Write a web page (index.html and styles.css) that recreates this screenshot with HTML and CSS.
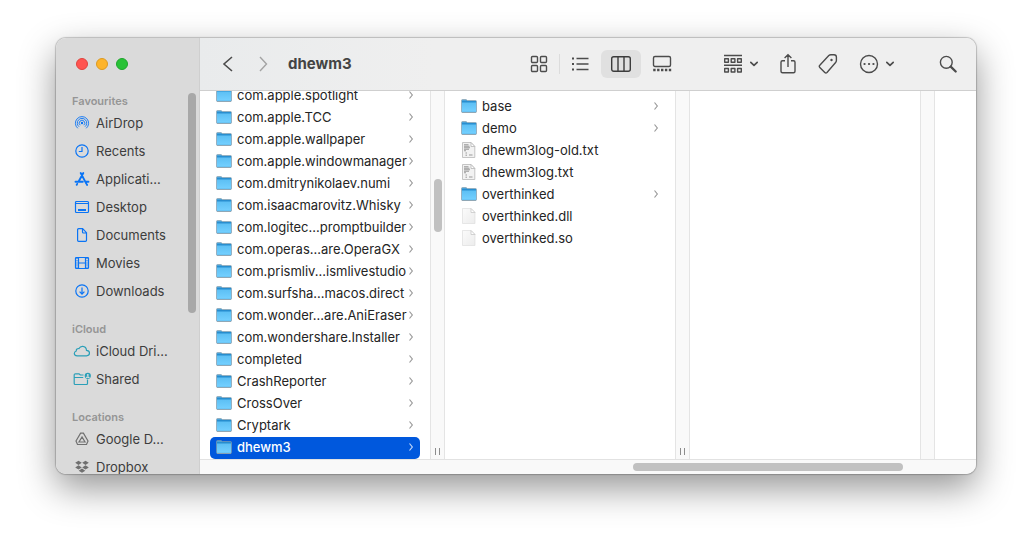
FILE: index.html
```html
<!DOCTYPE html>
<html lang="en">
<head>
<meta charset="utf-8">
<title>dhewm3</title>
<link rel="stylesheet" href="styles.css">
</head>
<body>
<svg class="sprite" aria-hidden="true">
  <defs>
    <linearGradient id="folder-fill" x1="0" y1="0" x2="0" y2="1"><stop offset="0" stop-color="#5cbff4"/><stop offset="1" stop-color="#74d0ff"/></linearGradient>
    <linearGradient id="page-fill" x1="0" y1="0" x2="1" y2="1"><stop offset="0" stop-color="#fbfbfb"/><stop offset="1" stop-color="#ececec"/></linearGradient>
  </defs>
  <symbol id="folder" viewBox="0 0 16 16">
    <path d="M.5 13.500V2.500q0-1 1-1H5l1.500 1h8q1 0 1 1v10q0 1-1 1h-13q-1 0-1-1z" fill="#4aa3da" stroke="#8a9ba5" stroke-width=".6"/>
    <path d="M1 3.200h14v1.600H1z" fill="#1f87cb"/>
    <path d="M1 4.500h14V13.800H1z" fill="url(#folder-fill)"/>
    <path d="M1 14.500h14" stroke="#8fa5b2" stroke-width=".8"/>
  </symbol>
  <symbol id="text-file" viewBox="0 0 16 16">
    <path d="M1.500.5H10L13.800 4.500v11H1.500z" fill="#f2f2f2" stroke="#b8b8b8" stroke-width=".8"/>
    <path d="M10 .5v4h3.800z" fill="#fff" stroke="#b5b5b5" stroke-width=".8"/>
    <path d="M3 2.800h4.500M3 4.300h5.500M3 5.800h6M3 7.300h5M3 8.800h2" stroke="#9a9a9a" stroke-width="1.100"/>
    <path d="M4.500 11h1.500M4.500 13.200h1.500M8 13h3.500" stroke="#999"/>
  </symbol>
  <symbol id="blank-file" viewBox="0 0 16 16">
    <path d="M1.500.5H10L14 4.500v11H1.500z" fill="url(#page-fill)" stroke="#dedede" stroke-width=".7"/>
    <path d="M10 .5v4h4z" fill="#fff" stroke="#c8c8c8" stroke-width=".8"/>
  </symbol>
  <symbol id="more-right" viewBox="0 0 6 10"><path d="M1.500 1.500 4.300 5 1.500 8.500" fill="none" stroke="currentColor" stroke-width="1.200"/></symbol>
  <symbol id="chevron-down" viewBox="0 0 10 10"><path d="m1.800 3.300 3.200 3 3.200-3" fill="none" stroke="currentColor" stroke-width="1.700" stroke-linecap="round" stroke-linejoin="round"/></symbol>
</svg>

<main class="window">
  <aside class="sidebar">
    <div class="traffic">
      <button class="light light-close" aria-label="Close"></button>
      <button class="light light-minimise" aria-label="Minimise"></button>
      <button class="light light-zoom" aria-label="Zoom"></button>
    </div>
    <div class="sidebar-body">
      <nav class="places" aria-label="Places">
        <section class="place-group">
          <h2 class="place-title">Favourites</h2>
          <a class="place" href="#"><svg class="place-icon" viewBox="0 0 16 16"><path d="M3.800 13.300a6.600 6.600 0 1 1 8.400 0M5 11.700a4.700 4.700 0 1 1 6 0M6.200 10.200a2.800 2.800 0 1 1 3.600 0" stroke-width=".9"/><circle cx="8" cy="8" r="1.200" fill="currentColor" stroke="none"/></svg><span class="place-name">AirDrop</span></a>
          <a class="place" href="#"><svg class="place-icon" viewBox="0 0 16 16"><circle cx="8" cy="8" r="6.200"/><path d="M8 4v4.500H4.800"/></svg><span class="place-name">Recents</span></a>
          <a class="place" href="#"><svg class="place-icon" viewBox="0 0 16 16"><path d="m6.700 2 5.600 10.600M9.300 2 4.500 10.800M1.500 10.700h7.300M11.800 10.700h2.700M3.200 12.900l-.5.900M12.900 13.600l.2.300" stroke-width="1.900" stroke-linecap="round"/></svg><span class="place-name">Applicati...</span></a>
          <a class="place" href="#"><svg class="place-icon" viewBox="0 0 16 16"><rect x="1.500" y="2.500" width="13" height="11" rx="1"/><path d="M2 4.500h12"/><path d="M4 11h8" stroke-width="1.800"/></svg><span class="place-name">Desktop</span></a>
          <a class="place" href="#"><svg class="place-icon" viewBox="0 0 16 16"><path d="M4.600 1.700h4l3.900 4v7.600q0 1-1 1H4.600q-1 0-1-1V2.700q0-1 1-1zM8.500 2v3q0 1 1 1h3"/></svg><span class="place-name">Documents</span></a>
          <a class="place" href="#"><svg class="place-icon" viewBox="0 0 16 16"><rect x="1.500" y="2.500" width="13" height="11" rx=".8"/><path d="M4.500 2.500v11M11.500 2.500v11M4.500 8h7"/><path d="M3 3v10M13 3v10" stroke-dasharray="1 1.200"/></svg><span class="place-name">Movies</span></a>
          <a class="place" href="#"><svg class="place-icon" viewBox="0 0 16 16"><circle cx="8" cy="8" r="6.200"/><path d="M8 4.500v6.500M5.600 8.700 8 11.100l2.400-2.400"/></svg><span class="place-name">Downloads</span></a>
        </section>
        <section class="place-group">
          <h2 class="place-title">iCloud</h2>
          <a class="place" href="#"><svg class="place-icon place-icon-teal" viewBox="0 0 16 16"><path d="M3.300 12.800C.9 12.800.3 11.500.3 10.500c0-1.200.7-2.100 1.900-2.500-.1-1.700 1.300-2.800 2.800-2.400.8-1.700 2.200-2.400 3.700-2.300 2.300.2 3.700 1.900 3.800 4.100 1.800.2 3 1.200 3 2.700s-1.200 2.700-3 2.700z"/></svg><span class="place-name">iCloud Dri...</span></a>
          <a class="place" href="#"><svg class="place-icon place-icon-teal" viewBox="0 0 16 16"><path d="M9.500 4H6.300L5 2.800H1.500q-1.300 0-1.300 1v8.700q0 1 1 1h11.300q1 0 1-1V8.500M.5 6.500h8.700"/><circle cx="13.800" cy="4.800" r="3.100" fill="currentColor" stroke="none"/><circle cx="13.800" cy="3.900" r="1" fill="#dadada" stroke="none"/><path d="M12.200 6.800q1.600-1.600 3.200 0" stroke="#dadada"/></svg><span class="place-name">Shared</span></a>
        </section>
        <section class="place-group">
          <h2 class="place-title">Locations</h2>
          <a class="place" href="#"><svg class="place-icon place-icon-grey" viewBox="0 0 16 16"><path d="M6.600 2.200h2.800L14 10l-1.500 3.500h-9L2 10zM8 6l-3 5h6z"/></svg><span class="place-name">Google D...</span></a>
          <a class="place" href="#"><svg class="place-icon place-icon-grey" viewBox="0 0 16 16"><path d="m4.500 1.700 3.300 2.100-3.300 2.100-3.300-2.100zM11.500 1.700l3.300 2.100-3.300 2.100-3.300-2.100zM4.500 6.300l3.300 2.100-3.300 2.100-3.300-2.100zM11.500 6.300l3.300 2.100-3.300 2.100-3.300-2.100zM8 9.500l3.300 2.200L8 13.800l-3.300-2.100z" fill="currentColor" stroke="none"/></svg><span class="place-name">Dropbox</span></a>
        </section>
      </nav>
      <div class="sidebar-thumb"></div>
    </div>
  </aside>

  <section class="browser">
    <header class="toolbar">
      <button class="tool tool-back" aria-label="Back"><svg class="tool-icon" viewBox="0 0 20 20"><path d="M14 3 6 10l8 7" stroke-width="1.600"/></svg></button>
      <button class="tool tool-forward" aria-label="Forward"><svg class="tool-icon" viewBox="0 0 20 20"><path d="m6 3 6.500 7L6 17"/></svg></button>
      <h1 class="title">dhewm3</h1>
      <div class="tool-group views">
        <button class="tool" aria-label="Icon view"><svg class="tool-icon" viewBox="0 0 20 20"><rect x="2.500" y="2.500" width="6" height="6" rx="1"/><rect x="11.500" y="2.500" width="6" height="6" rx="1"/><rect x="2.500" y="11.500" width="6" height="6" rx="1"/><rect x="11.500" y="11.500" width="6" height="6" rx="1"/></svg></button>
        <span class="divider"></span>
        <button class="tool" aria-label="List view"><svg class="tool-icon" viewBox="0 0 20 20"><path d="M6.500 4.500h12M6.500 10h12M6.500 15.500h12"/><path d="M2 4.500h2M2 10h2M2 15.500h2" stroke-width="2"/></svg></button>
        <button class="tool tool-active" aria-label="Column view" aria-pressed="true"><svg class="tool-icon" viewBox="0 0 20 20"><rect x=".7" y="2.700" width="18.600" height="14.600" rx="2"/><path d="M7 3v14M13 3v14"/></svg></button>
        <button class="tool" aria-label="Gallery view"><svg class="tool-icon" viewBox="0 0 20 20"><rect x="1.500" y="2.500" width="17" height="10" rx="1.500"/><path d="M1.200 16h18" stroke-width="2.400" stroke-dasharray="2.400 1.500"/></svg></button>
      </div>
      <button class="tool tool-menu tool-arrange" aria-label="Group by"><svg class="tool-icon" viewBox="0 0 20 20"><path d="M1 1.500h18M1 11.200h18"/><path d="M1.700 4.800h3.700v3.500H1.700zM8.200 4.800h3.700v3.500H8.200zM14.600 4.800h3.700v3.500h-3.700zM1.700 14.500h3.700V18H1.700zM8.200 14.500h3.700V18H8.200zM14.600 14.500h3.700V18h-3.700z" stroke-linejoin="round"/></svg><svg class="menu-arrow"><use href="#chevron-down"/></svg></button>
      <button class="tool" aria-label="Share"><svg class="tool-icon" viewBox="0 0 20 20"><path d="M7 6.700H4.500q-1.500 0-1.500 1.500v9q0 1.500 1.500 1.500h11q1.500 0 1.500-1.500v-9q0-1.500-1.500-1.500H13M10 13V1M6.600 4 10 .7 13.400 4"/></svg></button>
      <button class="tool tool-tags" aria-label="Tags"><svg class="tool-icon" viewBox="0 0 20 20"><path d="M10.800 1.500q.9-.8 2-.8h3.200q2.400 0 2.400 2.400v3.400q0 1.100-.8 2L9 18.400q-1.100 1.100-2.200 0l-5-5q-1.100-1.100 0-2.200z"/><circle cx="13.500" cy="6" r="1.200" fill="currentColor" stroke="none"/></svg></button>
      <button class="tool tool-menu" aria-label="Actions"><svg class="tool-icon" viewBox="0 0 20 20"><circle cx="10" cy="10" r="8.500"/><path d="M5.500 10h.1M10 10h.1M14.400 10h.1" stroke-width="2.200" stroke-linecap="round"/></svg><svg class="menu-arrow"><use href="#chevron-down"/></svg></button>
      <button class="tool tool-search" aria-label="Search"><svg class="tool-icon" viewBox="0 0 20 20"><circle cx="8.300" cy="8.300" r="5.900"/><path d="m12.700 12.700 5 4.800" stroke-width="2.300" stroke-linecap="round"/></svg></button>
    </header>

    <div class="columns">
      <ul class="files files-end">
        <li class="file"><svg class="file-icon"><use href="#folder"/></svg><span class="file-name">com.apple.spotlight</span><svg class="file-more"><use href="#more-right"/></svg></li>
        <li class="file"><svg class="file-icon"><use href="#folder"/></svg><span class="file-name">com.apple.TCC</span><svg class="file-more"><use href="#more-right"/></svg></li>
        <li class="file"><svg class="file-icon"><use href="#folder"/></svg><span class="file-name">com.apple.wallpaper</span><svg class="file-more"><use href="#more-right"/></svg></li>
        <li class="file"><svg class="file-icon"><use href="#folder"/></svg><span class="file-name">com.apple.windowmanager</span><svg class="file-more"><use href="#more-right"/></svg></li>
        <li class="file"><svg class="file-icon"><use href="#folder"/></svg><span class="file-name">com.dmitrynikolaev.numi</span><svg class="file-more"><use href="#more-right"/></svg></li>
        <li class="file"><svg class="file-icon"><use href="#folder"/></svg><span class="file-name">com.isaacmarovitz.Whisky</span><svg class="file-more"><use href="#more-right"/></svg></li>
        <li class="file"><svg class="file-icon"><use href="#folder"/></svg><span class="file-name">com.logitec...promptbuilder</span><svg class="file-more"><use href="#more-right"/></svg></li>
        <li class="file"><svg class="file-icon"><use href="#folder"/></svg><span class="file-name">com.operas...are.OperaGX</span><svg class="file-more"><use href="#more-right"/></svg></li>
        <li class="file"><svg class="file-icon"><use href="#folder"/></svg><span class="file-name">com.prismliv...ismlivestudio</span><svg class="file-more"><use href="#more-right"/></svg></li>
        <li class="file"><svg class="file-icon"><use href="#folder"/></svg><span class="file-name">com.surfsha...macos.direct</span><svg class="file-more"><use href="#more-right"/></svg></li>
        <li class="file"><svg class="file-icon"><use href="#folder"/></svg><span class="file-name">com.wonder...are.AniEraser</span><svg class="file-more"><use href="#more-right"/></svg></li>
        <li class="file"><svg class="file-icon"><use href="#folder"/></svg><span class="file-name">com.wondershare.Installer</span><svg class="file-more"><use href="#more-right"/></svg></li>
        <li class="file"><svg class="file-icon"><use href="#folder"/></svg><span class="file-name">completed</span><svg class="file-more"><use href="#more-right"/></svg></li>
        <li class="file"><svg class="file-icon"><use href="#folder"/></svg><span class="file-name">CrashReporter</span><svg class="file-more"><use href="#more-right"/></svg></li>
        <li class="file"><svg class="file-icon"><use href="#folder"/></svg><span class="file-name">CrossOver</span><svg class="file-more"><use href="#more-right"/></svg></li>
        <li class="file"><svg class="file-icon"><use href="#folder"/></svg><span class="file-name">Cryptark</span><svg class="file-more"><use href="#more-right"/></svg></li>
        <li class="file file-selected"><svg class="file-icon"><use href="#folder"/></svg><span class="file-name">dhewm3</span><svg class="file-more"><use href="#more-right"/></svg></li>
      </ul>
      <div class="track"><span class="track-thumb"></span><span class="grip"></span></div>
      <ul class="files">
        <li class="file"><svg class="file-icon"><use href="#folder"/></svg><span class="file-name">base</span><svg class="file-more"><use href="#more-right"/></svg></li>
        <li class="file"><svg class="file-icon"><use href="#folder"/></svg><span class="file-name">demo</span><svg class="file-more"><use href="#more-right"/></svg></li>
        <li class="file"><svg class="file-icon"><use href="#text-file"/></svg><span class="file-name">dhewm3log-old.txt</span></li>
        <li class="file"><svg class="file-icon"><use href="#text-file"/></svg><span class="file-name">dhewm3log.txt</span></li>
        <li class="file"><svg class="file-icon"><use href="#folder"/></svg><span class="file-name">overthinked</span><svg class="file-more"><use href="#more-right"/></svg></li>
        <li class="file"><svg class="file-icon"><use href="#blank-file"/></svg><span class="file-name">overthinked.dll</span></li>
        <li class="file"><svg class="file-icon"><use href="#blank-file"/></svg><span class="file-name">overthinked.so</span></li>
      </ul>
      <div class="track"><span class="grip"></span></div>
      <div class="files"></div>
      <div class="track"></div>
      <div class="rest"></div>
    </div>
    <div class="scroll-x"><span class="scroll-x-thumb"></span></div>
  </section>
</main>
</body>
</html>
```
FILE: styles.css
```css
* {
  box-sizing: border-box;
}

body {
  display: flex;
  height: 100vh;
  margin: 0;
  padding: 38px 56px 74px;
  background: #fff;
  color: #242424;
  font-family: Inter, "Liberation Sans", sans-serif;
  font-size: 13px;
  line-height: 16px;
}

.sprite {
  position: absolute;
  width: 0;
  height: 0;
}

button {
  margin: 0;
  padding: 0;
  border: 0;
  background: none;
  color: inherit;
  font: inherit;
}

.window {
  display: flex;
  flex: 1;
  min-width: 0;
  overflow: hidden;
  border-radius: 10px;
  background: #fff;
  box-shadow: 0 0 1px 1px rgba(0, 0, 0, 0.2), 0 14px 36px rgba(0, 0, 0, 0.42);
}

/* Sidebar */
.sidebar {
  display: flex;
  flex: none;
  flex-direction: column;
  width: 144px;
  border-right: 1px solid #cfcfcf;
  background: #dadada;
}

.traffic {
  display: flex;
  flex: none;
  gap: 8px;
  height: 55px;
  padding: 20px 20px 0;
}

.light {
  width: 12px;
  height: 12px;
  border: 1px solid;
  border-radius: 50%;
}

.light-close {
  border-color: #e0443e;
  background: #ff5450;
}

.light-minimise {
  border-color: #dd9a20;
  background: #fdb42a;
}

.light-zoom {
  border-color: #1ea52c;
  background: #28c236;
}

.sidebar-body {
  display: flex;
  flex: 1;
  min-height: 0;
}

.places {
  display: flex;
  flex: 1;
  flex-direction: column;
  gap: 16px;
  min-width: 0;
  padding-left: 16px;
  overflow: hidden;
}

.place-group {
  flex: none;
}

.place-title {
  margin: 0;
  color: #959595;
  font-size: 11px;
  font-weight: 600;
}

.place {
  display: flex;
  align-items: center;
  gap: 6px;
  height: 28px;
  padding-left: 2px;
  color: #3d3d3d;
  text-decoration: none;
  white-space: nowrap;
}

.place-icon {
  flex: none;
  width: 16px;
  height: 16px;
  overflow: visible;
  color: #0a74f5;
  fill: none;
  stroke: currentColor;
  stroke-width: 1.2;
}

.place-icon-teal {
  color: #2b9fb8;
}

.place-icon-grey {
  color: #707070;
}

.sidebar-thumb {
  width: 8px;
  height: 220px;
  margin-right: 3px;
  border-radius: 4px;
  background: #a8a8a8;
}

/* Toolbar */
.browser {
  display: flex;
  flex: 1;
  flex-direction: column;
  min-width: 0;
}

.toolbar {
  display: flex;
  flex: none;
  align-items: center;
  height: 53px;
  padding: 0 8px;
  border-bottom: 1px solid #cfcfcf;
  background: linear-gradient(90deg, #e9ebec, #efefef 30%);
  color: #4c4c4c;
}

.tool {
  display: flex;
  flex: none;
  align-items: center;
  justify-content: center;
  width: 40px;
  height: 28px;
  border-radius: 6px;
}

.tool-icon {
  width: 20px;
  height: 20px;
  overflow: visible;
  fill: none;
  stroke: currentColor;
  stroke-width: 1.4;
}

.tool-forward {
  width: 32px;
  color: #a3a3a3;
}

.tool-active {
  background: #e0e0e0;
  color: #3c3c3c;
}

.tool-menu {
  gap: 6px;
  width: 46px;
}

.tool-arrange {
  margin-right: 4px;
}

.tool-tags {
  margin-right: 6px;
}

.tool-search {
  margin-left: 28px;
}

.menu-arrow {
  width: 10px;
  height: 10px;
}

.title {
  flex: 1;
  margin: 0;
  padding-left: 8px;
  color: #444;
  font-size: 15px;
  font-weight: 700;
  line-height: 20px;
}

.views {
  display: flex;
  align-items: center;
  gap: 1px;
  margin-right: 36px;
}

.divider {
  width: 1px;
  height: 20px;
  margin: 0 -1px;
  background: #dcdcdc;
}

/* Column browser */
.columns {
  display: flex;
  flex: 1;
  min-height: 0;
  overflow: hidden;
}

.files {
  display: flex;
  flex: none;
  flex-direction: column;
  width: 230px;
  margin: 0;
  padding: 4px 10px 0;
  overflow: hidden;
  list-style: none;
}

.files-end {
  justify-content: flex-end;
  padding-top: 0;
}

.file {
  display: flex;
  flex: none;
  align-items: center;
  gap: 5px;
  height: 22px;
  padding: 0 6px;
  border-radius: 5px;
  white-space: nowrap;
}

.files-end .file {
  padding-bottom: 2px;
}

.file-selected {
  background: #0058dd;
  color: #fff;
  font-weight: 500;
}

.file-icon {
  flex: none;
  width: 16px;
  height: 16px;
}

.file-name {
  flex: 1;
  min-width: 0;
}

.file-more {
  flex: none;
  width: 6px;
  height: 10px;
  color: #9a9a9a;
}

.file-selected .file-more {
  color: #c3d8f8;
}

.track {
  position: relative;
  flex: none;
  width: 15px;
  border: 1px solid #e4e4e4;
  border-width: 0 1px;
  background: #f9f9f9;
}

.track-thumb {
  position: absolute;
  top: 24%;
  left: 3px;
  width: 8px;
  height: 53px;
  border-radius: 4px;
  background: #c1c1c1;
}

.grip {
  position: absolute;
  bottom: 4px;
  left: 4px;
  width: 5px;
  height: 7px;
  border: 1px solid #8c8c8c;
  border-width: 0 1px;
}

.rest {
  flex: 1;
}

.scroll-x {
  display: grid;
  flex: none;
  grid-template-columns: 433fr 270fr 73fr;
  align-items: center;
  height: 15px;
  border-top: 1px solid #e2e2e2;
  background: #f9f9f9;
}

.scroll-x-thumb {
  grid-column: 2;
  height: 8px;
  border-radius: 4px;
  background: #c1c1c1;
}
```
